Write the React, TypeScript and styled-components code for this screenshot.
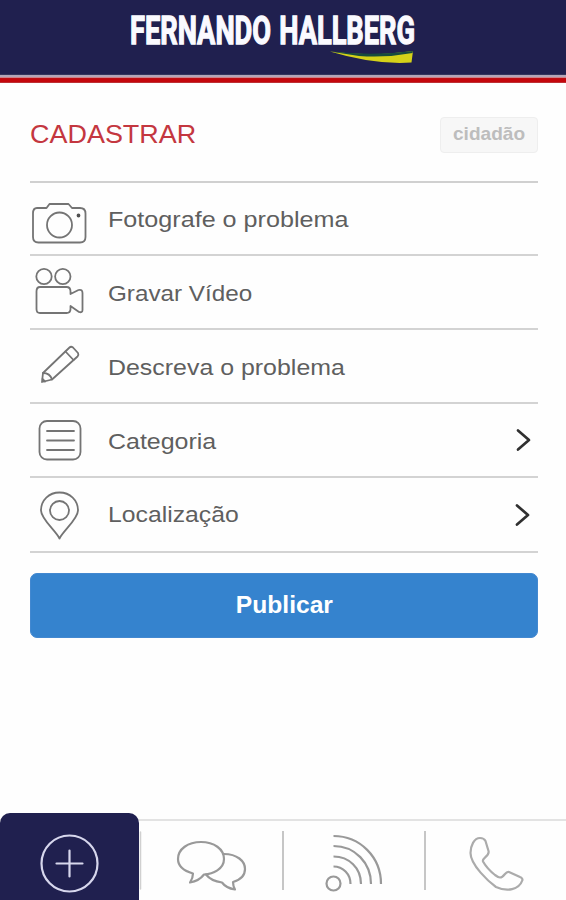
import React from "react";
import styled, { createGlobalStyle } from "styled-components";

const Global = createGlobalStyle`
  * { box-sizing: border-box; }
  body { margin: 0; background: #fefefe; font-family: "Liberation Sans", Arial, sans-serif; }
`;

const Screen = styled.div`
  width: 566px;
  height: 900px;
  display: flex;
  flex-direction: column;
  overflow: hidden;
  background: #fefefe;
`;

const Header = styled.header`
  height: 83px;
  flex: none;
  background: linear-gradient(#20204f 0 74px, #34345c 74px 75px, #b3a5b8 75px 77px, #d08088 77px 78px, #bd0d13 78px 79px, #c4060c 79px 82px, #bd3035 82px 83px);
`;

const Logo = styled.svg`
  display: block;
  width: 566px;
  height: 74px;
`;

const LogoText = styled.text`
  font-family: Roboto, "Liberation Sans", sans-serif;
  font-weight: 700;
  font-size: 38.5px;
  word-spacing: 2px;
  fill: #fafaff;
  stroke: #fafaff;
  stroke-width: 1.3px;
`;

const Main = styled.main`
  flex: 1;
  display: flex;
  flex-direction: column;
  padding: 0 28px 0 30px;
`;

const TitleBar = styled.div`
  height: 100px;
  flex: none;
  display: flex;
  align-items: center;
  justify-content: space-between;
  padding-top: 3px;
  border-bottom: 2px solid #d0d0d0;
`;

const Stretch = styled.span<{ $x: number }>`
  display: inline-block;
  white-space: nowrap;
  transform: scaleX(${(p) => p.$x});
  transform-origin: left center;
`;

const Title = styled.h1`
  margin: 0;
  font-size: 26.5px;
  line-height: 32px;
  font-weight: 400;
  color: #c43740;
`;

const Badge = styled.div`
  width: 98px;
  height: 36px;
  margin-top: 2px;
  padding: 0 0 1px 12px;
  display: flex;
  align-items: center;
  border: 1px solid #eeeeee;
  border-radius: 4px;
  background: #f7f7f7;
  color: #bdbdbd;
  font-size: 19px;
  font-weight: 700;
`;

const Row = styled.div<{ $h: number }>`
  height: ${(p) => p.$h}px;
  flex: none;
  display: flex;
  align-items: center;
  border-bottom: 2px solid #d3d3d3;
`;

const RowIcon = styled.svg`
  width: 60px;
  height: 72px;
  flex: none;
  fill: none;
  stroke: #747474;
  stroke-width: 1.8;
  stroke-linejoin: round;
  stroke-linecap: round;
`;

const Label = styled.div<{ $drop: number }>`
  flex: 1;
  margin-left: 18px;
  padding-top: ${(p) => p.$drop}px;
  font-size: 22.6px;
  line-height: 28px;
  color: #5f5f5f;
`;

const Chevron = styled.svg<{ $right: number }>`
  width: 18px;
  height: 28px;
  margin-right: ${(p) => p.$right}px;
  fill: none;
  stroke: #303030;
  stroke-width: 2.7;
  stroke-linecap: round;
  stroke-linejoin: round;
`;

const Publish = styled.button`
  height: 65px;
  flex: none;
  margin-top: 20px;
  padding: 0;
  border: 1px solid #4388d0;
  border-radius: 7px;
  background: #3583ce;
  color: #fff;
  font: 700 23px "Liberation Sans", Arial, sans-serif;
`;

const ButtonText = styled.span`
  display: inline-block;
  transform: scaleX(1.07);
`;

const TabBar = styled.nav`
  height: 87px;
  flex: none;
  display: grid;
  grid-template-columns: 139px 145px 142px 140px;
  background: linear-gradient(transparent 0 6px, #e3e3e3 6px 8px, transparent 8px);
`;

const Tab = styled.a<{ $active?: boolean; $divider?: boolean }>`
  display: block;
  height: 87px;
  border-radius: ${(p) => (p.$active ? "10px 10px 0 0" : "0")};
  background: ${(p) =>
    p.$active
      ? "#20204f"
      : p.$divider
        ? "linear-gradient(#c6c6c6, #c6c6c6) right 18px / 2px 59px no-repeat"
        : "none"};
`;

const TabIcon = styled.svg<{ $color: string }>`
  display: block;
  width: 100%;
  height: 87px;
  fill: none;
  stroke: ${(p) => p.$color};
  stroke-width: 2.2;
  stroke-linecap: round;
  stroke-linejoin: round;
`;

const rows = [
  {
    text: "Fotografe o problema", x: 1.113, h: 73, drop: 3,
    icon: (
      <>
        <path d="M7 25H16.5L19.5 21H38.5L42 25H50Q55.5 25 55.5 30.5V54Q55.5 59.5 50 59.5H8.500Q3 59.500 3 54V30.500Q3 25 7 25Z" />
        <circle cx="29.500" cy="42" r="12.500" />
        <circle cx="48.500" cy="32.500" r="1" fill="#505050" stroke="#505050" />
      </>
    ),
  },
  {
    text: "Gravar Vídeo", x: 1.073, h: 74, drop: 4,
    icon: (
      <>
        <circle cx="14" cy="20.500" r="7.700" />
        <circle cx="32.800" cy="20.500" r="7.700" />
        <path d="M10 31H36.500Q40.500 31 40.500 35.500V38L48.500 34Q52.500 33 52.500 37V54Q52.500 57 49 56L40.500 50V53Q40.500 57 36.500 57H10Q6.500 57 6.500 53V35.500Q6.500 31 10 31Z" />
      </>
    ),
  },
  {
    text: "Descreva o problema", x: 1.103, h: 74, drop: 4,
    icon: (
      <>
        <path d="M12 52L13 43L39.500 17.500Q41 16 43 17.500L48 23Q49 25 47.500 26.500L22 49.500Z" />
        <path d="M35.500 21.500L43.500 30M13 43Q20 43 22 49.500M12.500 49L15 51.500" />
      </>
    ),
  },
  {
    text: "Categoria", x: 1.105, h: 74, drop: 3, arrow: 7,
    icon: (
      <>
        <rect x="9.500" y="17" width="41" height="38.500" rx="7.500" />
        <path d="M17 27H44M17 36.500H44M17 46H44" />
      </>
    ),
  },
  {
    text: "Localização", x: 1.095, h: 75, drop: 1, arrow: 8,
    icon: (
      <>
        <path d="M29.500 59.500C26 52 11 40 11 31.500C11 21 19 13.500 29.500 13.500S48 21 48 31.500C48 40 33 52 29.500 59.500Z" />
        <circle cx="29.500" cy="31.500" r="9.500" />
      </>
    ),
  },
];

export default function App() {
  return (
    <>
      <Global />
      <Screen>
        <Header>
          <Logo viewBox="0 0 566 74" aria-label="Fernando Hallberg">
            <LogoText x="130" y="43.500" textLength="285" lengthAdjust="spacingAndGlyphs">FERNANDO HALLBERG</LogoText>
            <path d="M330 51.500Q374 57 413 51L411.500 62.500Q374 65 330 51.500Z" fill="#d5d119" />
            <path d="M330 51.500Q374 56 413 51L412.500 53Q386 58 359 56Z" fill="#174b3e" />
          </Logo>
        </Header>
        <Main>
          <TitleBar>
            <Title><Stretch $x={1.017}>CADASTRAR</Stretch></Title>
            <Badge><Stretch $x={1.005}>cidadão</Stretch></Badge>
          </TitleBar>
          {rows.map((row) => (
            <Row key={row.text} $h={row.h}>
              <RowIcon viewBox="0 0 60 72">{row.icon}</RowIcon>
              <Label $drop={row.drop}><Stretch $x={row.x}>{row.text}</Stretch></Label>
              {row.arrow !== undefined && (
                <Chevron viewBox="0 0 18 28" $right={row.arrow}>
                  <path d="M5 4.500L16 14L5 23.500" />
                </Chevron>
              )}
            </Row>
          ))}
          <Publish><ButtonText>Publicar</ButtonText></Publish>
        </Main>
        <TabBar>
          <Tab $active>
            <TabIcon viewBox="0 0 139 87" $color="#d7d7ed">
              <circle cx="69.500" cy="50.500" r="28" />
              <path d="M56.500 50.500H82.500M69.500 37.500V63.500" />
            </TabIcon>
          </Tab>
          <Tab $divider>
            <TabIcon viewBox="139 813 145 87" $color="#999999">
              <path d="M193 873.500C184 871 178 866 178 859C178 849 188 842 201 842S224 849 224 859C224 869 213 874 204 874.500Q199 881 190 882.500Q193 878 193 873.500Z" />
              <path d="M224 854C237 854 245 861 245 869C245 876 240 880 233 882Q233 886 235 889.500Q226 888 222 882.500Q211 881 206 874.500" />
              <path d="M140.500 832V889" stroke="#d0d0d0" strokeWidth="1.500" />
            </TabIcon>
          </Tab>
          <Tab $divider>
            <TabIcon viewBox="284 813 142 87" $color="#999999">
              <circle cx="333.500" cy="883.500" r="7" />
              <path strokeLinecap="butt" d="M333.500 836C360 836 381 857 381 884M333.500 846C355 846 371 863 371 884M333.500 856.500C349 856.500 361 868 361 884M333.500 866.500C343 866.500 350.500 874 350.500 884" />
            </TabIcon>
          </Tab>
          <Tab>
            <TabIcon viewBox="426 813 140 87" $color="#ababab">
              <path d="M480 838C474 838 470.500 846 470.500 853C470.500 865 489 882 496 887C507 892 519 890 522.500 880Q522.500 878 520 877L509 872Q507 871.500 505 874C501 879 499 878 495 875C490 871 485 865 483 861.500C481.500 858 490 856 488.500 851L485.500 841Q484 838 480 838Z" />
            </TabIcon>
          </Tab>
        </TabBar>
      </Screen>
    </>
  );
}
